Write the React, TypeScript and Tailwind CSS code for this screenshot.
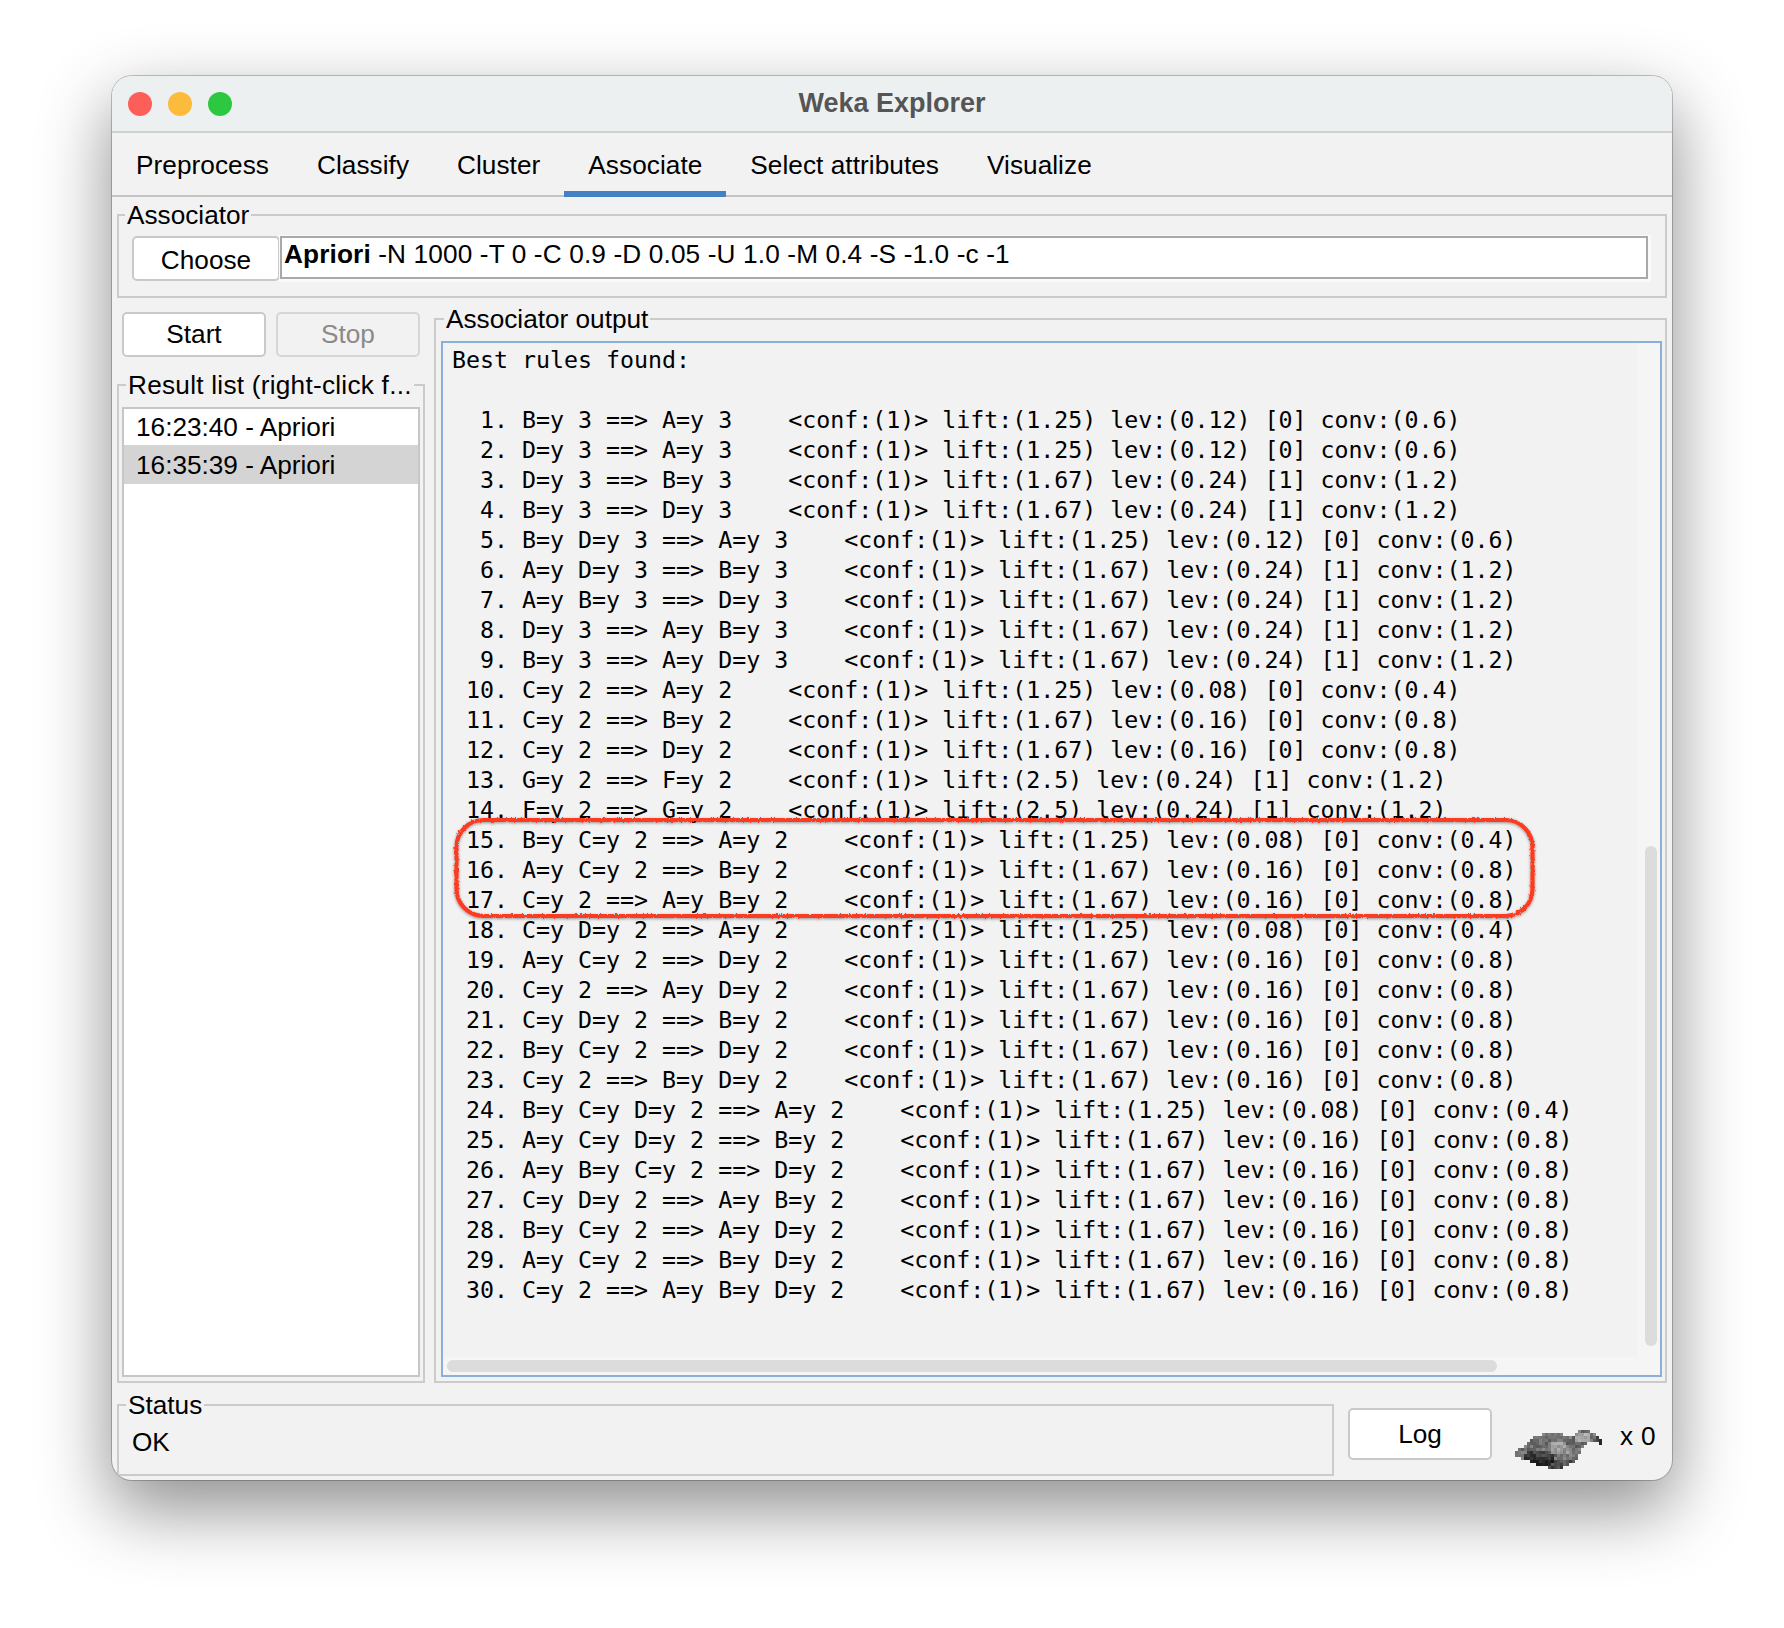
const rules = `Best rules found:

  1. B=y 3 ==> A=y 3    <conf:(1)> lift:(1.25) lev:(0.12) [0] conv:(0.6)
  2. D=y 3 ==> A=y 3    <conf:(1)> lift:(1.25) lev:(0.12) [0] conv:(0.6)
  3. D=y 3 ==> B=y 3    <conf:(1)> lift:(1.67) lev:(0.24) [1] conv:(1.2)
  4. B=y 3 ==> D=y 3    <conf:(1)> lift:(1.67) lev:(0.24) [1] conv:(1.2)
  5. B=y D=y 3 ==> A=y 3    <conf:(1)> lift:(1.25) lev:(0.12) [0] conv:(0.6)
  6. A=y D=y 3 ==> B=y 3    <conf:(1)> lift:(1.67) lev:(0.24) [1] conv:(1.2)
  7. A=y B=y 3 ==> D=y 3    <conf:(1)> lift:(1.67) lev:(0.24) [1] conv:(1.2)
  8. D=y 3 ==> A=y B=y 3    <conf:(1)> lift:(1.67) lev:(0.24) [1] conv:(1.2)
  9. B=y 3 ==> A=y D=y 3    <conf:(1)> lift:(1.67) lev:(0.24) [1] conv:(1.2)
 10. C=y 2 ==> A=y 2    <conf:(1)> lift:(1.25) lev:(0.08) [0] conv:(0.4)
 11. C=y 2 ==> B=y 2    <conf:(1)> lift:(1.67) lev:(0.16) [0] conv:(0.8)
 12. C=y 2 ==> D=y 2    <conf:(1)> lift:(1.67) lev:(0.16) [0] conv:(0.8)
 13. G=y 2 ==> F=y 2    <conf:(1)> lift:(2.5) lev:(0.24) [1] conv:(1.2)
 14. F=y 2 ==> G=y 2    <conf:(1)> lift:(2.5) lev:(0.24) [1] conv:(1.2)
 15. B=y C=y 2 ==> A=y 2    <conf:(1)> lift:(1.25) lev:(0.08) [0] conv:(0.4)
 16. A=y C=y 2 ==> B=y 2    <conf:(1)> lift:(1.67) lev:(0.16) [0] conv:(0.8)
 17. C=y 2 ==> A=y B=y 2    <conf:(1)> lift:(1.67) lev:(0.16) [0] conv:(0.8)
 18. C=y D=y 2 ==> A=y 2    <conf:(1)> lift:(1.25) lev:(0.08) [0] conv:(0.4)
 19. A=y C=y 2 ==> D=y 2    <conf:(1)> lift:(1.67) lev:(0.16) [0] conv:(0.8)
 20. C=y 2 ==> A=y D=y 2    <conf:(1)> lift:(1.67) lev:(0.16) [0] conv:(0.8)
 21. C=y D=y 2 ==> B=y 2    <conf:(1)> lift:(1.67) lev:(0.16) [0] conv:(0.8)
 22. B=y C=y 2 ==> D=y 2    <conf:(1)> lift:(1.67) lev:(0.16) [0] conv:(0.8)
 23. C=y 2 ==> B=y D=y 2    <conf:(1)> lift:(1.67) lev:(0.16) [0] conv:(0.8)
 24. B=y C=y D=y 2 ==> A=y 2    <conf:(1)> lift:(1.25) lev:(0.08) [0] conv:(0.4)
 25. A=y C=y D=y 2 ==> B=y 2    <conf:(1)> lift:(1.67) lev:(0.16) [0] conv:(0.8)
 26. A=y B=y C=y 2 ==> D=y 2    <conf:(1)> lift:(1.67) lev:(0.16) [0] conv:(0.8)
 27. C=y D=y 2 ==> A=y B=y 2    <conf:(1)> lift:(1.67) lev:(0.16) [0] conv:(0.8)
 28. B=y C=y 2 ==> A=y D=y 2    <conf:(1)> lift:(1.67) lev:(0.16) [0] conv:(0.8)
 29. A=y C=y 2 ==> B=y D=y 2    <conf:(1)> lift:(1.67) lev:(0.16) [0] conv:(0.8)
 30. C=y 2 ==> A=y B=y D=y 2    <conf:(1)> lift:(1.67) lev:(0.16) [0] conv:(0.8)`;

const tabs = ["Preprocess", "Classify", "Cluster", "Associate", "Select attributes", "Visualize"];

function Group({ title, className, legendClass, children }: { title: string; className: string; legendClass: string; children: React.ReactNode }) {
  return (
    <fieldset className={`min-w-0 border-2 border-[#cbcbcb] ${className}`}>
      <legend className={`px-[2px] h-[30px] leading-[30px] whitespace-nowrap ${legendClass}`}>{title}</legend>
      {children}
    </fieldset>
  );
}

// Column outline of the tiny bird picture, in the reference's pixels: [x, top, bottom]
const outline: [number, number, number][] = [
  [0, 25, 29], [7, 21, 31], [12, 15, 32], [17, 11, 36], [27, 8, 39], [37, 7, 41],
  [47, 8, 40], [57, 10, 35], [62, 5, 31], [67, 3, 20], [74, 4, 14], [81, 8, 15], [87, 15, 18],
];

function interp(x: number, a: 1 | 2) {
  for (let i = 0; i < outline.length - 1; i++) {
    const p = outline[i];
    const q = outline[i + 1];
    if (x >= p[0] && x <= q[0]) return p[a] + ((q[a] - p[a]) * (x - p[0])) / (q[0] - p[0]);
  }
  return 0;
}

function birdPixels() {
  const out: { x: number; y: number; fill: string }[] = [];
  let seed = 17;
  const rnd = () => {
    seed = (seed * 1103 + 12345) % 65536;
    return seed / 65536;
  };
  for (let x = 0; x < 88; x += 3) {
    const top = interp(x + 1, 1);
    const bot = interp(x + 1, 2);
    for (let y = 0; y < 44; y += 3) {
      if (y + 2 < top || y + 1 > bot) continue;
      let g = 85 + rnd() * 55;
      const dDark = Math.hypot((x - 22) / 16, (y - 30) / 9);
      const dLight = Math.hypot((x - 42) / 12, (y - 20) / 7);
      const dHead = Math.hypot((x - 66) / 7, (y - 9) / 6);
      if (dDark < 1) g -= 50;
      if (dLight < 1) g += 40;
      if (dHead < 1) g += 55;
      if (y > 32) g -= 35;
      if (x > 78) g -= 50;
      const v = Math.max(25, Math.min(205, Math.round(g)));
      out.push({ x, y, fill: `rgb(${v},${v},${v})` });
    }
  }
  return out;
}

function Bird() {
  return (
    <svg width="90" height="44" viewBox="0 0 90 44" className="shrink-0" shapeRendering="crispEdges">
      {birdPixels().map((p) => (
        <rect key={`${p.x}-${p.y}`} x={p.x} y={p.y} width="3" height="3" fill={p.fill} />
      ))}
    </svg>
  );
}

function RedMark() {
  return (
    <svg width="1095" height="115" viewBox="0 0 1095 115" className="pointer-events-none absolute left-[335px] top-[734px]">
      <defs>
        <filter id="rough" x="-2%" y="-10%" width="104%" height="120%">
          <feTurbulence type="fractalNoise" baseFrequency="0.45" numOctaves="2" seed="4" result="n" />
          <feDisplacementMap in="SourceGraphic" in2="n" scale="3" result="d" />
          <feDropShadow in="d" dx="0" dy="1" stdDeviation="1.8" floodColor="#000000" floodOpacity="0.4" />
        </filter>
      </defs>
      <rect x="9.5" y="10" width="1076" height="96" rx="27" ry="27" fill="none" stroke="#fb3b22" strokeWidth="4.2" filter="url(#rough)" />
    </svg>
  );
}

export default function App() {
  return (
    <div className="min-h-[1628px] bg-white pt-[76px] pl-[112px] text-[26.2px] text-black" style={{ fontFamily: '"Liberation Sans", Arial, sans-serif' }}>
      <div className="relative flex h-[1404px] w-[1560px] flex-col overflow-hidden rounded-[20px] bg-[#f2f2f2] shadow-[0_0_0_1px_rgba(0,0,0,0.22),0_28px_70px_2px_rgba(0,0,0,0.44)]">
        <div className="relative flex h-[57px] shrink-0 items-center border-b-2 border-[#d0d2d2] bg-[#edf0f0] pl-[16px]">
          <div className="flex gap-[16px]">
            <span className="h-[24px] w-[24px] rounded-full bg-[#fc5f57]" />
            <span className="h-[24px] w-[24px] rounded-full bg-[#fdbb3c]" />
            <span className="h-[24px] w-[24px] rounded-full bg-[#2cc840]" />
          </div>
          <span className="flex-1 pr-[120px] text-center text-[27px] font-bold text-[#555555]">Weka Explorer</span>
        </div>
        <div className="flex h-[64px] shrink-0 border-b-2 border-[#c4c4c4]">
          {tabs.map((t) => (
            <div key={t} className={`-mb-[2px] flex items-center border-t-[8px] border-b-[6px] border-t-transparent px-[24px] tracking-[0.05px] ${t === "Associate" ? "border-b-[#4380c4]" : "border-b-transparent"}`}>{t}</div>
          ))}
        </div>
        <div className="flex min-h-0 flex-1 flex-col px-[5px] pb-[5px] pt-[3px]">
          <Group title="Associator" className="h-[98px] shrink-0 px-[13px] pt-[6px]" legendClass="-ml-[7px]">
            <div className="flex items-start">
              <button className="h-[45px] w-[148px] shrink-0 rounded-[5px] border-2 border-[#c9c9c9] bg-white pt-[3px]">Choose</button>
              <div className="h-[43px] w-[1368px] border-2 border-[#a9a9a9] bg-white pl-[2px] leading-[32px] tracking-[0.14px] shadow-[1px_1px_0_2px_#fafafa]">
                <b>Apriori</b> -N 1000 -T 0 -C 0.9 -D 0.05 -U 1.0 -M 0.4 -S -1.0 -c -1
              </div>
            </div>
          </Group>
          <div className="flex h-[1085px] shrink-0 gap-[9px]">
            <div className="flex w-[308px] shrink-0 flex-col">
              <div className="flex gap-[10px] px-[5px] pt-[14px]">
                <button className="h-[45px] w-[144px] rounded-[5px] border-2 border-[#c9c9c9] bg-white pt-[1px]">Start</button>
                <button className="h-[45px] w-[144px] rounded-[5px] border-2 border-[#d6d6d6] bg-[#f2f2f2] pt-[1px] text-[#8a8a8a]">Stop</button>
              </div>
              <Group title="Result list (right-click f..." className="mt-[13px] flex min-h-0 flex-1 flex-col px-[3px] pb-[4px] pt-[7px]" legendClass="ml-[4px] tracking-[0.25px]">
                <div className="h-[970px] border-2 border-[#c6c6c6] bg-white">
                  <div className="flex h-[36px] items-center pl-[12px] pt-[2px]">16:23:40 - Apriori</div>
                  <div className="flex h-[39px] items-center bg-[#d4d4d4] pl-[12px] pt-[3px]">16:35:39 - Apriori</div>
                </div>
              </Group>
            </div>
            <Group title="Associator output" className="mt-[6px] min-w-0 flex-1 pb-[4px] pl-[5px] pr-[3px] pt-[7px]" legendClass="ml-[3px]">
              <div className="relative h-[1036px] overflow-hidden border-2 border-[#8aafd8] bg-[#f5f5f5]">
                <div className="h-[1014px] w-[1194px] bg-[#f2f2f2]">
                  <pre className="pl-[9px] pt-[2px] text-[23.27px] leading-[30px] text-black" style={{ fontFamily: '"DejaVu Sans Mono", monospace' }}>{rules}</pre>
                </div>
                <div className="absolute bottom-[3px] left-[4px] h-[12px] w-[1050px] rounded-full bg-[#dcdcdc]" />
                <div className="absolute right-[3px] top-[503px] h-[500px] w-[12px] rounded-full bg-[#dcdcdc]" />
              </div>
            </Group>
          </div>
          <div className="mt-[7px] flex min-h-0 flex-1 items-start">
            <Group title="Status" className="h-[86px] w-[1217px] shrink-0 pl-[13px] pt-[7px]" legendClass="-ml-[6px]">
              <div className="leading-[30px]">OK</div>
            </Group>
            <button className="ml-[14px] mt-[18px] h-[52px] w-[144px] shrink-0 rounded-[5px] border-2 border-[#c9c9c9] bg-white pt-[2px]">Log</button>
            <div className="ml-[23px] mt-[37px]"><Bird /></div>
            <span className="ml-[15px] mt-[27px] whitespace-nowrap tracking-[0.3px]">x 0</span>
          </div>
        </div>
        <RedMark />
      </div>
    </div>
  );
}
